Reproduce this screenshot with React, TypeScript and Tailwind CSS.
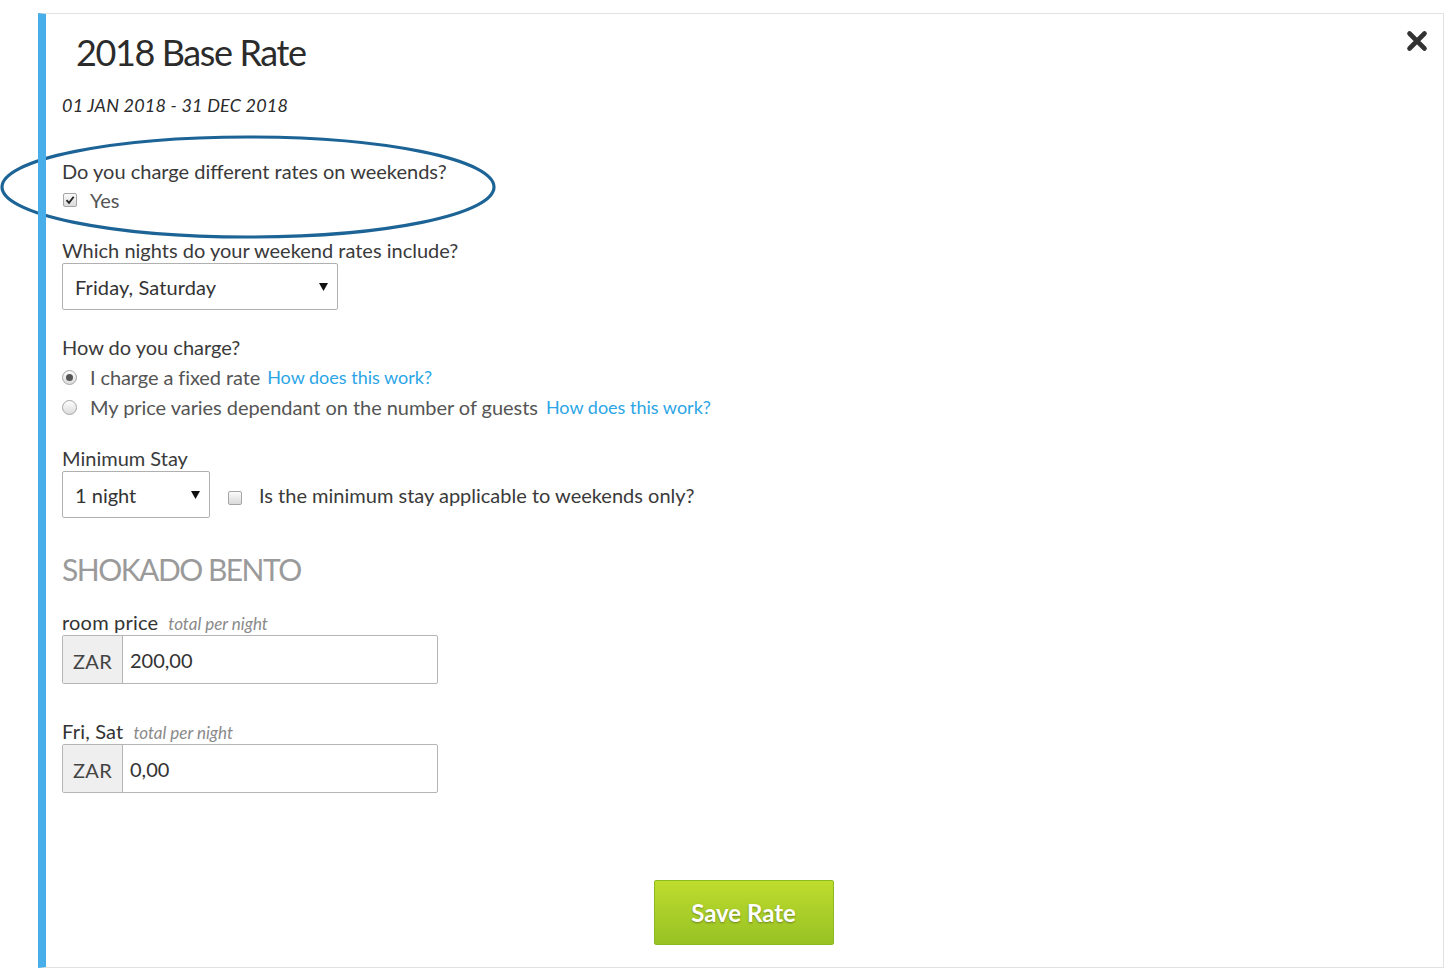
import React from "react";

function Caret() {
  return (
    <svg width="9" height="9" viewBox="0 0 9 9" className="shrink-0">
      <path d="M0 1 L9 1 L4.5 9 Z" fill="#111" />
    </svg>
  );
}

function Radio({ checked }: { checked?: boolean }) {
  return (
    <span className="relative inline-flex h-[15px] w-[15px] shrink-0 items-center justify-center rounded-full border border-[#a5a5a5] bg-gradient-to-b from-[#fdfdfd] to-[#dcdcdc]">
      {checked && <span className="h-[7px] w-[7px] rounded-full bg-[#555]" />}
    </span>
  );
}

function Check({ checked }: { checked?: boolean }) {
  return (
    <span className="inline-flex h-[14px] w-[14px] shrink-0 items-center justify-center rounded-[2px] border border-[#a5a5a5] bg-gradient-to-b from-[#fbfbfb] to-[#dadada]">
      {checked && (
        <svg width="10" height="10" viewBox="0 0 10 10">
          <path d="M1.5 5.2 L4 7.8 L8.7 1.8" fill="none" stroke="#222" strokeWidth="1.8" />
        </svg>
      )}
    </span>
  );
}

function MoneyInput({ value }: { value: string }) {
  return (
    <div className="mt-[2px] flex h-[49px] w-[376px] rounded-[2px] border border-[#b5b5b5]">
      <div className="flex w-[60px] items-center justify-center border-r border-[#b5b5b5] bg-[#efefef] pt-[3px] text-[20px] tracking-[0.3px] text-[#444]">ZAR</div>
      <div className="flex items-center pl-[7px] text-[20px] text-[#333] tracking-[0px]">{value}</div>
    </div>
  );
}

export default function App() {
  return (
    <div className="relative min-h-[977px] w-full bg-white pl-[38px] pt-[13px] pb-[9px] pr-[10px] font-['Lato','Open_Sans',sans-serif] text-[#3a3a3a]">
      <svg className="pointer-events-none absolute left-0 top-0" width="500" height="245">
        <ellipse cx="248" cy="187" rx="246" ry="50" fill="none" stroke="#1c6396" strokeWidth="3.2" />
      </svg>
      <div className="relative h-[955px] border-l-[8px] border-t border-r border-b border-l-[#48aeea] border-t-[#e2e2e2] border-r-[#e2e2e2] border-b-[#e2e2e2] pl-[16px] pt-[20px]">
        <button className="absolute right-[15px] top-[16px] text-[#333]">
          <svg width="22" height="22" viewBox="0 0 22 22">
            <path d="M3.5 3.5 L18.5 18.5 M18.5 3.5 L3.5 18.5" stroke="#333" strokeWidth="4.6" strokeLinecap="round" />
          </svg>
        </button>
        <h1 className="pl-[14px] text-[36px] leading-[36px] tracking-[-1.4px] text-[#2b2b2b]">2018 Base Rate</h1>
        <p className="mt-[23px] text-[18px] italic leading-[24px] tracking-[0.2px] text-[#2b2b2b]">01 JAN 2018 - 31 DEC 2018</p>

        <p className="mt-[41px] text-[20px] leading-[26px] tracking-[0px]">Do you charge different rates on weekends?</p>
        <div className="mt-[3px] flex h-[26px] items-center gap-[13px] pl-[1px]">
          <Check checked />
          <span className="text-[20px] tracking-[0px] text-[#555]">Yes</span>
        </div>

        <p className="mt-[24px] text-[20px] leading-[26px] tracking-[0px]">Which nights do your weekend rates include?</p>
        <div className="flex h-[47px] w-[276px] items-center justify-between rounded-[2px] border border-[#b0b0b0] pl-[12px] pr-[9px]">
          <span className="text-[20px] tracking-[0.1px] text-[#333]">Friday, Saturday</span>
          <Caret />
        </div>

        <p className="mt-[24px] text-[20px] leading-[26px] tracking-[0px]">How do you charge?</p>
        <div className="mt-[4px] flex h-[26px] items-center">
          <Radio checked />
          <span className="ml-[13px] text-[20px] tracking-[-0.1px] text-[#555]">I charge a fixed rate</span>
          <a className="ml-[7px] text-[18px] tracking-[0px] text-[#2ba5e6]">How does this work?</a>
        </div>
        <div className="mt-[4px] flex h-[26px] items-center">
          <Radio />
          <span className="ml-[13px] text-[20px] tracking-[-0.05px] text-[#555]">My price varies dependant on the number of guests</span>
          <a className="ml-[8px] text-[18px] tracking-[0px] text-[#2ba5e6]">How does this work?</a>
        </div>

        <p className="mt-[25px] text-[20px] leading-[26px] tracking-[0px]">Minimum Stay</p>
        <div className="flex items-center">
          <div className="flex h-[47px] w-[148px] items-center justify-between rounded-[2px] border border-[#b0b0b0] pl-[12px] pr-[9px]">
            <span className="text-[20px] tracking-[0px] text-[#333]">1 night</span>
            <Caret />
          </div>
          <span className="ml-[18px] mt-[8px]"><Check /></span>
          <span className="ml-[17px] text-[20px] tracking-[0px] text-[#3a3a3a]">Is the minimum stay applicable to weekends only?</span>
        </div>

        <h2 className="mt-[33px] text-[30px] leading-[36px] tracking-[-1.5px] text-[#9a9a9a]">SHOKADO BENTO</h2>

        <div className="mt-[20px] flex h-[26px] items-baseline">
          <span className="text-[20px] tracking-[0.2px] text-[#333]">room price</span>
          <span className="ml-[10px] text-[17px] italic tracking-[0px] text-[#8a8a8a]">total per night</span>
        </div>
        <MoneyInput value="200,00" />

        <div className="mt-[32px] flex h-[26px] items-baseline">
          <span className="text-[20px] tracking-[0.2px] text-[#333]">Fri, Sat</span>
          <span className="ml-[10px] text-[17px] italic tracking-[0px] text-[#8a8a8a]">total per night</span>
        </div>
        <MoneyInput value="0,00" />

        <div className="mt-[87px] flex justify-center">
          <button className="mr-[18px] flex h-[65px] w-[180px] items-center justify-center rounded-[2px] border border-[#8dba1f] bg-gradient-to-b from-[#bedc2e] to-[#97c224] text-[24px] font-bold tracking-[0px] text-white [text-shadow:0_1px_2px_rgba(0,0,0,0.35)]">
            Save Rate
          </button>
        </div>
      </div>
    </div>
  );
}
